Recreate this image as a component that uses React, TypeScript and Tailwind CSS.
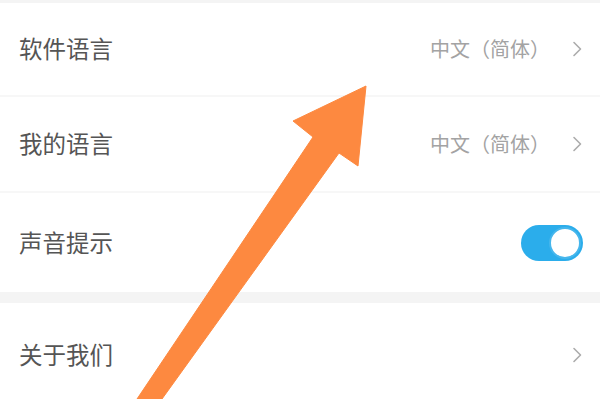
import React from 'react';

const font = { fontFamily: '"Noto Sans CJK SC", "Noto Sans", sans-serif' };

function Chevron() {
  return (
    <svg width="12" height="16" viewBox="0 0 12 16" className="shrink-0">
      <polyline points="3,1.5 9.5,8 3,14.5" fill="none" stroke="#acacac" strokeWidth="1.6" strokeLinecap="round" strokeLinejoin="round" />
    </svg>
  );
}

function Row({ label, value, height, right }: { label: string; value?: string; height: string; right?: React.ReactNode }) {
  return (
    <div className={`flex items-center justify-between pl-[19px] pr-[17px] ${height}`}>
      <span className="text-[23.5px] text-[#555555] leading-none">{label}</span>
      <div className="flex items-center gap-[21px]">
        {value && <span className="text-[20px] text-[#a3a3a3] leading-none">{value}</span>}
        {right ?? <Chevron />}
      </div>
    </div>
  );
}

function Toggle() {
  return (
    <div className="flex items-center justify-end w-[62px] h-[36px] rounded-full bg-[#2badeb] p-[2px]">
      <div className="w-[32px] h-[32px] rounded-full bg-white border-2 border-[#46b6ec]" />
    </div>
  );
}

export default function App() {
  return (
    <div className="relative w-[614px] h-[399px] overflow-hidden bg-white" style={font}>
      <div className="w-[600px] flex flex-col">
        <div className="h-[3px] bg-[#f4f4f4]" />
        <Row label="软件语言" value="中文（简体）" height="h-[92px]" />
        <div className="h-[2px] bg-[#f7f7f7]" />
        <Row label="我的语言" value="中文（简体）" height="h-[94px]" />
        <div className="h-[2px] bg-[#f7f7f7]" />
        <Row label="声音提示" height="h-[99px]" right={<Toggle />} />
        <div className="h-[11px] bg-[#f4f4f4]" />
        <Row label="关于我们" height="h-[104px]" />
      </div>

      {/* annotation arrow */}
      <svg className="absolute inset-0 pointer-events-none" width="614" height="399" viewBox="0 0 614 399">
        <polygon
          points="137,399 162,399 339,153 358,166 366,86 293,121 313,137"
          fill="#fd8940"
          stroke="#fd8940"
          strokeWidth="1"
          strokeLinejoin="round"
        />
      </svg>
    </div>
  );
}
